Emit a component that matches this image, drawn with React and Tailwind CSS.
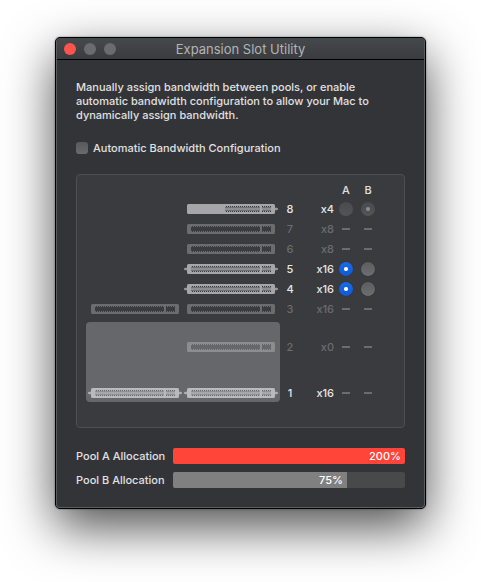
import { useState } from "react";
import clsx from "clsx";

const SLOTS = [
  { id: 8, lanes: "x4", card: true, half: true, pool: "B", locked: true },
  { id: 7, lanes: "x8" },
  { id: 6, lanes: "x8" },
  { id: 5, lanes: "x16", card: true, pool: "A" },
  { id: 4, lanes: "x16", card: true, pool: "A" },
  { id: 3, lanes: "x16", double: true },
];

const MPX_SLOTS = [
  { id: 2, lanes: "x0", mpx: "top" },
  { id: 1, lanes: "x16", card: true, double: true, mpx: "bottom" },
];

const POOLS = [
  { name: "Pool A Allocation", value: 200 },
  { name: "Pool B Allocation", value: 75 },
];

const Connector = ({ card, half }) => {
  const start = half ? 41 : 7;
  return (
    <svg
      width="94"
      height="10"
      viewBox="0 0 94 10"
      fill="#fff"
      className="block"
      shapeRendering="crispEdges"
      aria-hidden="true"
    >
      {/* Frame with the two cut-outs */}
      <path
        fillRule="evenodd"
        shapeRendering="auto"
        fillOpacity={card ? 0.55 : 0.25}
        d={`M4.5 0H89.5a1.5 1.5 0 0 1 1.5 1.5V8.5a1.5 1.5 0 0 1-1.5 1.5H4.5a1.5 1.5 0 0 1-1.5-1.5V1.5a1.5 1.5 0 0 1 1.5-1.5Z M${start} 2V8H76V2Z M78 2V8H87V2Z`}
      />
      {/* Pins */}
      <g
        stroke="#fff"
        strokeOpacity={card ? 0.5 : 0.25}
        strokeDasharray="1 1"
        fill="none"
      >
        <path d={`M${start} 2.5H76M${start} 7.5H76M79 2.5H87M79 7.5H87`} />
      </g>
      {card && (
        <g>
          <path
            fillOpacity="0.27"
            d={`M${start} 3H76V7H${start}ZM78 3H87V7H78Z`}
          />
          <path
            fillOpacity="0.22"
            d={`M${start} 4H76V6H${start}ZM78 4H87V6H78Z`}
          />
          <path
            fillOpacity="0.4"
            d={half ? "M91 4H94V6H91Z" : "M0 4H3V6H0ZM91 4H94V6H91Z"}
          />
          <path
            fillOpacity="0.12"
            d={half ? "M91 3H93V7H91Z" : "M1 3H3V7H1ZM91 3H93V7H91Z"}
          />
        </g>
      )}
    </svg>
  );
};

const PoolRadio = ({ slot, pool, value, onChange }) => {
  if (!slot.pool) {
    return <span className="mx-auto block h-0.5 w-2 bg-[#6b6c6e]" />;
  }
  return (
    <input
      type="radio"
      name={`slot-${slot.id}`}
      aria-label={`Slot ${slot.id}, pool ${pool}`}
      checked={value === pool}
      disabled={slot.locked}
      onChange={() => onChange(slot.id, pool)}
      className="mx-auto block size-3.5 appearance-none rounded-full bg-linear-to-b from-[#5c5d5f] to-[#6d6e70] shadow-[0_0_1px_rgba(0,0,0,0.5)] checked:bg-[radial-gradient(circle,#fff_1.5px,transparent_2.5px),linear-gradient(#1a6bea,#1258d2)] disabled:bg-linear-to-b disabled:from-[#4a4b4d] disabled:to-[#535456] disabled:shadow-none disabled:checked:bg-[radial-gradient(circle,#8b8c8e_1.5px,transparent_2.5px),linear-gradient(#4a4b4d,#535456)]"
    />
  );
};

const SlotRow = ({ slot, value, onChange }) => {
  const active = Boolean(slot.card);
  const top = slot.mpx === "top";
  const bottom = slot.mpx === "bottom";
  const pad = bottom && "pt-3";

  return (
    <tr
      className={clsx(
        top ? "h-[50px]" : bottom ? "h-[30px]" : "h-5",
        active ? "text-[#e6e6e7]" : "text-[#6b6c6f]"
      )}
    >
      <td
        className={clsx(
          "pl-0.5",
          pad,
          slot.mpx && "bg-[#66676a]",
          top && "rounded-tl",
          bottom && "rounded-bl"
        )}
      >
        {slot.double && <Connector card={slot.card} />}
      </td>
      <td
        className={clsx(
          "pl-0.5",
          pad,
          slot.mpx && "bg-[#66676a]",
          top && "rounded-tr",
          bottom && "rounded-br"
        )}
      >
        <Connector card={slot.card} half={slot.half} />
      </td>
      <th scope="row" className={clsx("text-center font-medium", pad)}>
        {slot.id}
      </th>
      <td className={clsx("pr-px text-right font-medium", pad)}>
        {slot.lanes}
      </td>
      <td className={clsx(pad)}>
        <PoolRadio slot={slot} pool="A" value={value} onChange={onChange} />
      </td>
      <td className={clsx(pad)}>
        <PoolRadio slot={slot} pool="B" value={value} onChange={onChange} />
      </td>
    </tr>
  );
};

const TitleBar = () => (
  <header className="grid h-[22px] grid-cols-[1fr_auto_1fr] items-center border-b border-black bg-linear-to-b from-[#46494c] to-[#3a3c3f] px-[7px]">
    <div className="flex gap-2">
      <button
        aria-label="Close"
        className="size-3 rounded-full bg-[#ff544d]"
      />
      <button
        aria-label="Minimize"
        disabled
        className="size-3 rounded-full bg-[#6a6b6d]"
      />
      <button
        aria-label="Zoom"
        disabled
        className="size-3 rounded-full bg-[#6a6b6d]"
      />
    </div>
    <h1 className="text-[13px] leading-4 text-[#b3b4b6]">
      Expansion Slot Utility
    </h1>
  </header>
);

const App = () => {
  const [auto, setAuto] = useState(false);
  const [pools, setPools] = useState({ 8: "B", 5: "A", 4: "A" });

  const handleChange = (id, pool) => {
    setPools((prev) => ({ ...prev, [id]: pool }));
  };

  return (
    <main className="min-h-screen bg-white px-[55px] pt-[37px] pb-[72px] font-[Inter,'Liberation_Sans',sans-serif] text-[11px] leading-[14px] text-[#e0e0e1]">
      <div className="rounded-[5px] border border-black bg-[#333438] shadow-[0_0_2px_rgba(0,0,0,0.5),0_18px_50px_rgba(0,0,0,0.7)]">
        <div className="overflow-hidden rounded-[4px] border border-t-0 border-[#5b5c5f]">
          <TitleBar />

          <div className="px-[19px] pt-5 pb-[19px]">
            <p className="font-medium">
              Manually assign bandwidth between pools, or enable automatic
              bandwidth configuration to allow your Mac to dynamically assign
              bandwidth.
            </p>

            <label className="mt-[19px] flex items-center gap-[5px] font-medium">
              <input
                type="checkbox"
                checked={auto}
                onChange={(e) => setAuto(e.target.checked)}
                className="size-3 appearance-none rounded-[3px] bg-linear-to-b from-[#58595b] to-[#6a6b6d] checked:from-[#1a6bea] checked:to-[#1258d2]"
              />
              Automatic Bandwidth Configuration
            </label>

            {/* Slots */}
            <section className="mt-[19px] rounded border border-[#4e4f52] bg-[#3a3b3e] pt-1.5 pr-2 pb-[25px] pl-[9px]">
              <table className="table-fixed border-separate border-spacing-0">
                <colgroup>
                  <col className="w-24" />
                  <col className="w-[98px]" />
                  <col className="w-5" />
                  <col className="w-[35px]" />
                  <col className="w-[22px]" />
                  <col className="w-[22px]" />
                </colgroup>
                <thead>
                  <tr className="h-[18px]">
                    <td colSpan={4} />
                    <th scope="col" className="font-medium">
                      A
                    </th>
                    <th scope="col" className="font-medium">
                      B
                    </th>
                  </tr>
                </thead>
                <tbody>
                  {SLOTS.map((slot) => (
                    <SlotRow
                      key={slot.id}
                      slot={slot}
                      value={pools[slot.id]}
                      onChange={handleChange}
                    />
                  ))}
                  <tr className="h-[3px]" aria-hidden="true">
                    <td colSpan={6} />
                  </tr>
                  {MPX_SLOTS.map((slot) => (
                    <SlotRow key={slot.id} slot={slot} />
                  ))}
                </tbody>
              </table>
            </section>

            {/* Allocation bars */}
            <div className="mt-5 flex flex-col gap-2">
              {POOLS.map((pool) => (
                <div key={pool.name} className="flex h-4 items-center">
                  <span className="w-[97px] shrink-0 font-medium">
                    {pool.name}
                  </span>
                  <div className="h-4 flex-1 overflow-hidden rounded-xs bg-[#48494a]">
                    <div
                      className={clsx(
                        "flex h-4 items-center justify-end pr-1 font-medium text-white",
                        pool.value > 100 ? "bg-[#ff453a]" : "bg-[#808080]"
                      )}
                      style={{ width: `${Math.min(pool.value, 100)}%` }}
                    >
                      {pool.value}%
                    </div>
                  </div>
                </div>
              ))}
            </div>
          </div>
        </div>
      </div>
    </main>
  );
};

export default App;
